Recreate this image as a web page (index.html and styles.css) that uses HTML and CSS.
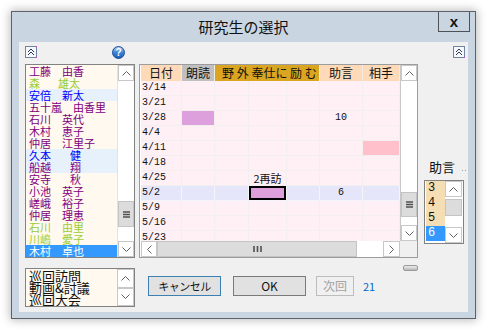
FILE: index.html
```html
<!DOCTYPE html>
<html lang="ja">
<head>
<meta charset="utf-8">
<title>研究生の選択</title>
<link rel="stylesheet" href="styles.css">
</head>
<body>
<div class="win">
  <div class="titlebar">
    <div></div>
    <div class="title">研究生の選択</div>
    <button class="close">x</button>
  </div>
  <div class="client">
    <div class="toolbar">
      <svg class="chev" width="12" height="12" viewBox="0 0 12 12"><rect x="0.5" y="0.5" width="11" height="11" fill="#f4f7fb" stroke="#7283a0"/><path d="M3 6 L6 3 L9 6 M3 9 L6 6 L9 9" fill="none" stroke="#2b3550" stroke-width="1"/><rect x="0" y="0" width="1" height="1" fill="#e040e0"/><rect x="11" y="0" width="1" height="1" fill="#e040e0"/><rect x="0" y="11" width="1" height="1" fill="#e040e0"/><rect x="11" y="11" width="1" height="1" fill="#e040e0"/></svg>
      <svg class="help" width="13" height="13" viewBox="0 0 13 13"><defs><linearGradient id="hg" x1="0" y1="0" x2="0" y2="1"><stop offset="0" stop-color="#b5d2f4"/><stop offset="0.5" stop-color="#3f84d6"/><stop offset="1" stop-color="#1c5bb4"/></linearGradient></defs><circle cx="6.5" cy="6.5" r="6" fill="url(#hg)" stroke="#1d4f98"/><text x="6.5" y="10.2" text-anchor="middle" font-family="Liberation Sans, sans-serif" font-weight="bold" font-size="10" fill="#fff">?</text></svg>
      <svg class="chev r" width="12" height="12" viewBox="0 0 12 12"><rect x="0.5" y="0.5" width="11" height="11" fill="#f4f7fb" stroke="#7283a0"/><path d="M3 6 L6 3 L9 6 M3 9 L6 6 L9 9" fill="none" stroke="#2b3550" stroke-width="1"/><rect x="0" y="11" width="1" height="1" fill="#e040e0"/><rect x="11" y="11" width="1" height="1" fill="#e040e0"/></svg>
    </div>

    <div class="main">
      <div class="lb names">
        <ul class="items">
          <li class="p"><span class="s">工藤</span>由香</li>
          <li class="g"><span class="s s29">森</span>雄太</li>
          <li class="b bg"><span class="s">安倍</span>新太</li>
          <li class="p"><span class="s s44">五十嵐</span>由香里</li>
          <li class="p"><span class="s">石川</span>英代</li>
          <li class="p"><span class="s">木村</span>恵子</li>
          <li class="p"><span class="s">仲居</span>江里子</li>
          <li class="b bg"><span class="s s41">久本</span>健</li>
          <li class="p bg"><span class="s s41">船越</span>翔</li>
          <li class="p"><span class="s s41">安寺</span>秋</li>
          <li class="p"><span class="s">小池</span>英子</li>
          <li class="p"><span class="s">嵯峨</span>裕子</li>
          <li class="p"><span class="s">仲居</span>理恵</li>
          <li class="g"><span class="s">石川</span>由里</li>
          <li class="g"><span class="s">川嶋</span>愛子</li>
          <li class="sel"><span class="s">木村</span>卓也</li>
        </ul>
        <div class="vsb">
          <div class="sbtn"><svg width="9" height="5" viewBox="0 0 9 5"><path d="M0.5 4.5 L4.5 0.5 L8.5 4.5" fill="none" stroke="#606060"/></svg></div>
          <div class="track t120"></div>
          <div class="thumb th26"><svg width="7" height="7" viewBox="0 0 7 7"><path d="M0 1h7M0 3.5h7M0 6h7" stroke="#505050" stroke-width="1.4"/></svg></div>
          <div class="track grow"></div>
          <div class="sbtn"><svg width="9" height="5" viewBox="0 0 9 5"><path d="M0.5 0.5 L4.5 4.5 L8.5 0.5" fill="none" stroke="#606060"/></svg></div>
        </div>
      </div>

      <div class="grid">
        <div class="tbl">
          <div class="h peach">日付</div>
          <div class="h silver">朗読</div>
          <div class="h gold span3">野 外 奉仕に 励 む</div>
          <div class="h peach">助言</div>
          <div class="h peach">相手</div>

          <div class="c d">3/14</div><div class="c"></div><div class="c"></div><div class="c"></div><div class="c"></div><div class="c"></div><div class="c"></div>
          <div class="c d">3/21</div><div class="c"></div><div class="c"></div><div class="c"></div><div class="c"></div><div class="c"></div><div class="c"></div>
          <div class="c d">3/28</div><div class="c plum"></div><div class="c"></div><div class="c"></div><div class="c"></div><div class="c n">10</div><div class="c"></div>
          <div class="c d">4/4</div><div class="c"></div><div class="c"></div><div class="c"></div><div class="c"></div><div class="c"></div><div class="c"></div>
          <div class="c d">4/11</div><div class="c"></div><div class="c"></div><div class="c"></div><div class="c"></div><div class="c"></div><div class="c pink"></div>
          <div class="c d">4/18</div><div class="c"></div><div class="c"></div><div class="c"></div><div class="c"></div><div class="c"></div><div class="c"></div>
          <div class="c d">4/25</div><div class="c"></div><div class="c"></div><div class="c jp">2再訪</div><div class="c"></div><div class="c"></div><div class="c"></div>
          <div class="c d hl">5/2</div><div class="c hl"></div><div class="c hl"></div><div class="c hl cur"></div><div class="c hl"></div><div class="c hl n">6</div><div class="c hl"></div>
          <div class="c d">5/9</div><div class="c"></div><div class="c"></div><div class="c"></div><div class="c"></div><div class="c"></div><div class="c"></div>
          <div class="c d">5/16</div><div class="c"></div><div class="c"></div><div class="c"></div><div class="c"></div><div class="c"></div><div class="c"></div>
          <div class="c d">5/23</div><div class="c"></div><div class="c"></div><div class="c"></div><div class="c"></div><div class="c"></div><div class="c"></div>
        </div>
        <div class="vsb gv">
          <div class="sbtn"><svg width="9" height="5" viewBox="0 0 9 5"><path d="M0.5 4.5 L4.5 0.5 L8.5 4.5" fill="none" stroke="#606060"/></svg></div>
          <div class="track t111"></div>
          <div class="thumb th25"><svg width="7" height="7" viewBox="0 0 7 7"><path d="M0 1h7M0 3.5h7M0 6h7" stroke="#505050" stroke-width="1.4"/></svg></div>
          <div class="track grow"></div>
          <div class="sbtn"><svg width="9" height="5" viewBox="0 0 9 5"><path d="M0.5 0.5 L4.5 4.5 L8.5 0.5" fill="none" stroke="#606060"/></svg></div>
        </div>
        <div class="hsb">
          <div class="hbtn"><svg width="5" height="9" viewBox="0 0 5 9"><path d="M4.5 0.5 L0.5 4.5 L4.5 8.5" fill="none" stroke="#606060"/></svg></div>
          <div class="hthumb"><svg width="9" height="6" viewBox="0 0 9 6"><path d="M1 0v6M4.5 0v6M8 0v6" stroke="#505050" stroke-width="1.6"/></svg></div>
          <div class="htrack"></div>
          <div class="hbtn"><svg width="5" height="9" viewBox="0 0 5 9"><path d="M0.5 0.5 L4.5 4.5 L0.5 8.5" fill="none" stroke="#606060"/></svg></div>
        </div>
        <div class="corner"></div>
      </div>

      <div class="side">
        <div class="lblrow"><span class="lbl">助言</span><span class="dots"></span></div>
        <div class="lb counsel">
          <ul class="nums">
            <li class="w">3</li>
            <li class="w">4</li>
            <li class="w">5</li>
            <li class="sel">6</li>
          </ul>
          <div class="vsb sm">
            <div class="sbtn"><svg width="9" height="5" viewBox="0 0 9 5"><path d="M0.5 4.5 L4.5 0.5 L8.5 4.5" fill="none" stroke="#606060"/></svg></div>
            <div class="track t2"></div>
            <div class="thumb th17"></div>
            <div class="track grow"></div>
            <div class="sbtn"><svg width="9" height="5" viewBox="0 0 9 5"><path d="M0.5 0.5 L4.5 4.5 L8.5 0.5" fill="none" stroke="#606060"/></svg></div>
          </div>
        </div>
      </div>
    </div>

    <div class="bottom">
      <div class="lb tasks">
        <ul class="titems">
          <li>巡回訪問</li>
          <li>動画&amp;討議</li>
          <li>巡回大会</li>
        </ul>
        <div class="vsb tv">
          <div class="sbtn tall"><svg width="9" height="5" viewBox="0 0 9 5"><path d="M0.5 4.5 L4.5 0.5 L8.5 4.5" fill="none" stroke="#606060"/></svg></div>
          <div class="sbtn tall"><svg width="9" height="5" viewBox="0 0 9 5"><path d="M0.5 0.5 L4.5 4.5 L8.5 0.5" fill="none" stroke="#606060"/></svg></div>
        </div>
      </div>
      <button class="btn cancel">キャンセル</button>
      <button class="btn ok">OK</button>
      <button class="btn next">次回</button>
      <span class="count">21</span>
      <span class="gbar"></span>
    </div>
  </div>
</div>
</body>
</html>
```
FILE: styles.css
```css
* { box-sizing: border-box; margin: 0; padding: 0; }
html, body { background: #fff; }
body {
  width: 490px; height: 334px; overflow: hidden;
  font-family: "Noto Sans CJK JP", "Noto Sans", sans-serif;
}
.win {
  margin: 11px 0 0 11px;
  width: 465px; height: 308px;
  border: 1px solid #5d6268;
  background: #c9d6e1;
  box-shadow: 0 0 9px 1px rgba(0,0,0,.28);
  display: flex; flex-direction: column;
}
.titlebar {
  height: 30px;
  display: grid; grid-template-columns: 1fr auto 1fr; align-items: start;
}
.title { font-size: 15px; line-height: 30px; color: #111; }
.close {
  justify-self: end; margin-right: 5px;
  width: 32px; height: 20px;
  border: 1px solid #4e5257; border-top: none;
  background: #c9d6e1;
  font: bold 15px/16px "Liberation Sans", sans-serif; color: #111;
}
.client {
  margin: 0 7px 6px;
  height: 270px;
  background: #f0f0f0;
  display: flex; flex-direction: column;
}
.toolbar {
  height: 22px; display: flex; align-items: flex-start;
  padding: 4px 3px 0 6px;
}
.chev { display: block; }
.help { display: block; margin-left: 75px; }
.chev.r { margin-left: auto; }

.main { display: flex; height: 194px; padding-left: 6px; }

/* list boxes */
.lb { border: 1px solid #828282; background: #fff9ef; display: flex; }
.names { width: 110px; height: 194px; }
.items {
  flex: 1; list-style: none; overflow: hidden;
  font-size: 11px; line-height: 12px;
}
.items li { height: 12px; padding-left: 3px; white-space: nowrap; }
.items .s { display: inline-block; width: 33px; }
.items .s29 { width: 29px; }
.items .s41 { width: 41px; }
.items .s44 { width: 44px; }
.p { color: #800080; }
.g { color: #9acd32; }
.b { color: #0000ff; }
.bg { background: #e6f1fb; }
.items .sel { background: #3399ff; color: #fff; }

/* scroll bars */
.vsb {
  width: 17px; display: flex; flex-direction: column;
  background: #fff; border-left: 1px solid #e3e3e3;
}
.sbtn {
  height: 16px; flex: none;
  border: 1px solid #c8c8c8; background: #fff;
  display: flex; align-items: center; justify-content: center;
}
.sbtn svg, .hbtn svg, .thumb svg, .hthumb svg { display: block; }
.track { flex: none; background: #fff; }
.grow { flex: 1; }
.t120 { height: 120px; }
.t111 { height: 111px; }
.t2 { height: 2px; }
.thumb {
  flex: none; background: #dcdcdc; border: 1px solid #c4c4c4;
  display: flex; align-items: center; justify-content: center;
}
.th26 { height: 26px; }
.th25 { height: 25px; }
.th17 { height: 17px; }

/* grid */
.grid {
  margin-left: 4px; width: 279px; height: 194px;
  border: 1px solid #9c9c9c; padding-left: 1px; background: #fff;
  display: grid; grid-template-columns: 259px 17px; grid-template-rows: 176px 16px;
}
.tbl {
  display: grid;
  grid-template-columns: 41px 33px 34px 38px 33px 43px 37px;
  grid-template-rows: 16px;
  grid-auto-rows: 15px;
  overflow: hidden;
}
.h {
  font-size: 12px; line-height: 16px; text-align: center; color: #111;
  border-right: 1px solid #f3ece4; white-space: pre;
}
.peach { background: #ffdab9; }
.silver { background: #c0c0c0; }
.gold { background: #daa520; text-align: left; padding-left: 7px; }
.span3 { grid-column: span 3; }
.c {
  background: #fff0f5;
  border-right: 1px solid #f3eff0; border-bottom: 1px solid #f3eff0;
  font: 10px/14px "Liberation Mono", monospace; color: #111;
}
.d { padding-left: 1px; }
.n { text-align: center; }
.jp { font: 11px/14px "Noto Sans CJK JP", sans-serif; text-align: center; }
.plum { background: #dda0dd; }
.pink { background: #ffc0cb; }
.c.hl { background: #e6e6fa; border-color: #f4f4fb; }
.c.cur { background: #dda0dd; box-shadow: inset 0 0 0 2px #000; }
.gv { border-left: 1px solid #c8c8c8; }
.hsb { display: flex; background: #fff; }
.hbtn {
  width: 17px; flex: none; border: 1px solid #c8c8c8; background: #fff;
  display: flex; align-items: center; justify-content: center;
}
.hbtn:first-child { width: 16px; }
.hthumb {
  width: 200px; flex: none; background: #dcdcdc;
  border: 1px solid #c4c4c4;
  display: flex; align-items: center; justify-content: center;
}
.htrack { flex: 1; background: #fff; }
.corner { background: #f0f0f0; }

/* right panel */
.side { flex: 1; padding-top: 95px; }
.lblrow { display: flex; align-items: flex-end; padding-left: 11px; height: 16px; }
.lbl { font-size: 13px; line-height: 16px; color: #111; }
.dots {
  width: 4px; height: 1px; margin: 0 0 4px 7px;
  background: linear-gradient(90deg, #999 0 1px, transparent 1px 3px, #999 3px 4px);
}
.counsel {
  margin: 5px 0 0 6px; width: 40px; height: 64px;
  padding: 0 1px; background: #fff;
}
.nums { width: 19px; list-style: none; font: 12px/15px "Liberation Mono", monospace; }
.nums li { height: 15px; padding-left: 2px; color: #111; }
.nums .w { background: #f5deb3; }
.nums .sel { background: #3399ff; color: #fff; }
.vsb.sm { flex: none; width: 17px; border-left: none; }

/* bottom */
.bottom { display: flex; align-items: flex-start; padding-left: 6px; }
.tasks { margin-top: 10px; width: 110px; height: 39px; }
.titems { flex: 1; list-style: none; font-size: 13px; line-height: 12px; padding: 1px 0 0 3px; white-space: nowrap; overflow: hidden; color: #111; }
.vsb.tv { flex: none; border-left: none; }
.sbtn.tall { height: auto; flex: 1; }
.btn {
  margin-top: 18px; height: 20px;
  border: 1px solid #adadad; background: #e1e1e1;
  font-family: "Noto Sans CJK JP", sans-serif; font-size: 12px; line-height: 16px; color: #111;
}
.cancel { margin-left: 13px; width: 73px; border-color: #3c7fb1; font-size: 11px; letter-spacing: -0.5px; }
.ok { margin-left: 12px; width: 73px; border-color: #7a7a7a; }
.next { margin-left: 10px; width: 38px; border-color: #bdbdbd; background: #f0f0f0; color: #a3a3a3; }
.count { margin: 18px 0 0 9px; font-size: 11px; line-height: 20px; color: #0066cc; }
.gbar {
  margin: 7px 50px 0 auto; width: 15px; height: 6px;
  border: 1px solid #9a9a9a; border-radius: 2px;
  background: linear-gradient(#ececec, #b9b9b9);
}
```
